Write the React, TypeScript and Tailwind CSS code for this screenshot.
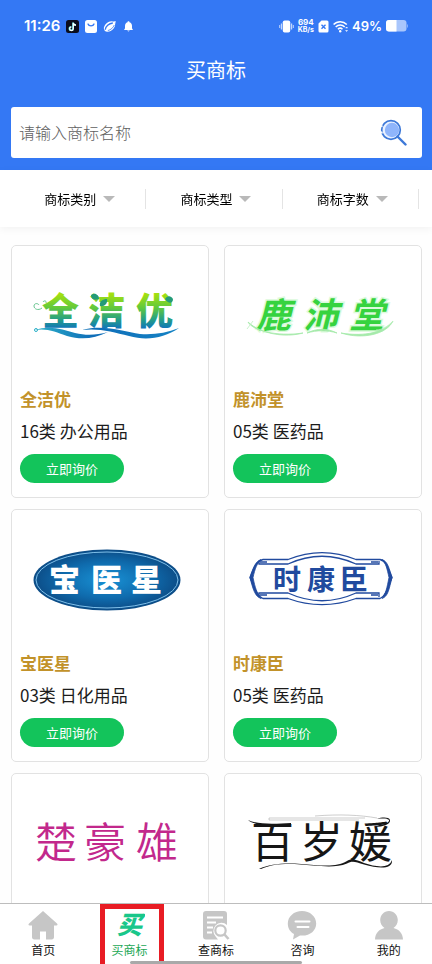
import React from "react";

const cjk = "font-['Noto_Sans_CJK_SC',sans-serif]";
const logoFont = "'Noto Sans CJK SC', sans-serif";

function StatusBar() {
  return (
    <div className="flex h-[52px] items-center justify-between pl-6 pr-6 font-['Inter',sans-serif] text-white">
      <div className="flex items-center gap-1.5">
        <span className="text-[15px] font-semibold leading-5">11:26</span>
        <svg className="h-[13px] w-[13px]" viewBox="0 0 13 13">
          <rect width="13" height="13" rx="2.5" fill="#0b0d1c" />
          <path d="M7 2.5v6a1.8 1.8 0 1 1-1.8-1.8M7 2.5c.2 1.6 1.2 2.5 2.8 2.6" fill="none" stroke="#5ff0ee" strokeWidth="1.6" />
          <path d="M7.3 2.8v6a1.8 1.8 0 1 1-1.8-1.8M7.3 2.8c.2 1.5 1.2 2.3 2.7 2.4" fill="none" stroke="#fff" strokeWidth="1.2" />
        </svg>
        <svg className="h-[13px] w-[12px]" viewBox="0 0 12 13">
          <rect width="12" height="13" rx="2.5" fill="#fff" />
          <path d="M3 4c.8 2.6 5.200 2.600 6 0" fill="none" stroke="#3478f4" strokeWidth="1.3" strokeLinecap="round" />
        </svg>
        <svg className="h-[13px] w-[13px]" viewBox="0 0 13 13">
          <ellipse cx="6.500" cy="6.500" rx="6.300" ry="4.300" transform="rotate(-38 6.500 6.500)" fill="#fff" />
          <path d="M2.200 9.800C2.400 6.500 6 3.300 9.800 3" fill="none" stroke="#3478f4" strokeWidth="1.400" />
          <path d="M4.800 10.600C8 9.800 10.300 7.500 11.300 5" fill="none" stroke="#3478f4" strokeWidth=".8" />
          <path d="M10 1.800l2.700-.9-.5 3" fill="#fff" />
        </svg>
        <svg className="h-[13px] w-[13px]" viewBox="0 0 13 13" fill="#fff">
          <path d="M6.500 1.300c.7 0 1 .4 1 1C9.300 2.900 10 4.300 10 6v2.200L11 10H2l1-1.800V6c0-1.700.7-3.100 2.500-3.700 0-.6.3-1 1-1zM5.200 10.600h2.600c-.2 1.100-2.400 1.100-2.600 0z" />
        </svg>
      </div>
      <div className="flex items-center gap-1">
        <svg className="h-[13px] w-[15px]" viewBox="0 0 15 13">
          <rect x="3.800" y="0.500" width="7.400" height="12" rx="1.800" fill="#fff" />
          <path d="M2.500 3.500v6M12.500 3.500v6" stroke="#c3d7fc" strokeWidth="1.400" />
          <path d="M.7 5v3M14.300 5v3" stroke="#c3d7fc" strokeWidth="1" />
        </svg>
        <div className="flex flex-col items-center text-[8px] font-bold leading-2">
          <span>694</span>
          <span className="text-[7px]">KB/s</span>
        </div>
        <svg className="h-[13px] w-[11px]" viewBox="0 0 11 13">
          <path d="M3.500.5H9a1.500 1.500 0 0 1 1.500 1.500v9A1.500 1.500 0 0 1 9 12.500H2A1.500 1.500 0 0 1 .5 11V3.500z" fill="#fff" />
          <path d="M3.500 4.700l4 4M7.500 4.700l-4 4" stroke="#3478f4" strokeWidth="1.400" />
        </svg>
        <svg className="h-[13px] w-[15px]" viewBox="0 0 15 13" fill="none" stroke="#fff" strokeWidth="1.500">
          <path d="M.6 4.500c3.600-3.800 9.600-3.800 13.200 0M2.700 7c2.600-2.600 6.400-2.600 9 0M4.900 9.200c1.300-1.200 3.300-1.200 4.600 0" />
          <circle cx="7.200" cy="11.300" r="1.200" fill="#fff" stroke="none" />
          <path d="M12.600 8l1-1 1 1zM12.600 10.500l1 1 1-1z" fill="#fff" strokeWidth=".5" />
        </svg>
        <span className="text-[13px] font-semibold leading-5">49%</span>
        <svg className="h-[12px] w-[22px]" viewBox="0 0 22 12">
          <rect width="20.500" height="11.500" rx="3" fill="#a9c6fc" />
          <path d="M21 4v4c1-.5 1-3.500 0-4z" fill="#a9c6fc" />
          <path d="M3 0h7.500v11.500H3a3 3 0 0 1-3-3V3a3 3 0 0 1 3-3z" fill="#fff" />
        </svg>
      </div>
    </div>
  );
}

function SearchBox() {
  return (
    <form className="ml-[11px] mr-2.5 flex h-[51px] items-center rounded-[3px] bg-white" onSubmit={(e) => e.preventDefault()}>
      <input
        type="text"
        aria-label="请输入商标名称"
        placeholder="请输入商标名称"
        className="h-full min-w-0 flex-1 bg-transparent pb-0.5 pl-2 text-[16px] font-light text-gray-800 outline-none placeholder:text-[#606060]"
      />
      <button type="submit" aria-label="搜索" className="mr-[15px]">
        <svg className="h-[27px] w-[27px]" viewBox="0 0 27 27">
          <circle cx="11" cy="11" r="9.300" fill="#e9f1ff" stroke="#3c78d8" strokeWidth="1.700" />
          <circle cx="12" cy="11" r="7.200" fill="#8fb5fb" />
          <path d="M17.500 17.500l8 8" stroke="#3c78d8" strokeWidth="2.400" strokeLinecap="round" />
          <path d="M2.300 6.500l-.8 1.500M1.500 12.500l.7 2" stroke="#fff" strokeWidth="1.500" />
        </svg>
      </button>
    </form>
  );
}

function Filters() {
  return (
    <div className="relative z-10 flex h-[57px] shrink-0 items-center bg-white pl-2.5 pr-[13px] shadow-[0_2px_8px_rgba(0,0,0,0.05)]">
      {["商标类别", "商标类型", "商标字数"].map((name) => (
        <label key={name} className="flex h-5 flex-1 items-center justify-center gap-1.5 border-r border-[#e4e4e4] pl-1">
          <select aria-label={name} className="appearance-none bg-transparent text-[13px] leading-5 text-black outline-none">
            <option>{name}</option>
          </select>
          <svg className="h-1.5 w-3" viewBox="0 0 12 6">
            <path d="M0 0h12L6 6z" fill="#b9b9b9" />
          </svg>
        </label>
      ))}
    </div>
  );
}

const svgClass = "block h-[140px] w-full";

function LogoQuan() {
  return (
    <svg className={svgClass} viewBox="0 0 196 140" role="img" aria-label="全洁优">
      <defs>
        <linearGradient id="quan" gradientUnits="userSpaceOnUse" x1="0" y1="48" x2="0" y2="82">
          <stop offset="0" stopColor="#a4e010" />
          <stop offset=".4" stopColor="#62c93c" />
          <stop offset=".75" stopColor="#259f86" />
          <stop offset="1" stopColor="#1277b8" />
        </linearGradient>
        <linearGradient id="wave" x1="0" y1="0" x2="1" y2="0">
          <stop offset="0" stopColor="#2bb0c8" />
          <stop offset=".4" stopColor="#0f6db8" />
          <stop offset="1" stopColor="#1583c4" />
        </linearGradient>
      </defs>
      <text x="30 76 124" y="79" fontFamily={logoFont} fontWeight="900" fontSize="37" fill="url(#quan)">全洁优</text>
      <path d="M23 84c14-5 28-1 40 3 12 3 22 2 33-1-14 7-27 8-41 4-11-4-20-8-32-6zM70 84c22-6 42 2 58 4 14 1 26-1 39-6-15 10-32 13-50 8-16-4-30-8-47-6z" fill="url(#wave)" />
      <path d="M30 62c-4 3-8 1-8-2s4-3 5-1M34 57c1-2-2-3-3-1" fill="none" stroke="#67c58f" strokeWidth="1" />
      <path d="M79 49c4-3 8 0 8 4-5 2-8 0-8-4zM88 60c-1-5 3-7 7-7 1 5-3 8-7 7zM153 53c3-4 6-3 8 0 0 5-5 5-8 0z" fill="#249b78" />
      <circle cx="24" cy="84" r="1.500" fill="none" stroke="#2bb0c8" />
    </svg>
  );
}

function LogoLu() {
  return (
    <svg className={svgClass} viewBox="0 0 196 140" role="img" aria-label="鹿沛堂">
      <text x="31 78 124" y="82" fontFamily={logoFont} fontWeight="700" fontSize="35" fontStyle="italic" fill="#36d33f" stroke="#dcfadc" strokeWidth="3" paintOrder="stroke">鹿沛堂</text>
      <path d="M23 76c4 8 28 15 55 11-18 5-42 1-55-11zM82 87c10-5 20-5 30 0-10-3-20-3-30 0zM116 87c24 4 44-1 52-12-6 13-30 19-52 12z" fill="#a5eaaa" stroke="#a5eaaa" strokeWidth=".8" />
      <path d="M22 83l6-8M151 84c8 0 14-6 17-9" fill="none" stroke="#bdf0bf" strokeWidth=".8" />
    </svg>
  );
}

function LogoBao() {
  return (
    <svg className={svgClass} viewBox="0 0 196 140" role="img" aria-label="宝医星">
      <defs>
        <radialGradient id="bao">
          <stop offset="0" stopColor="#1992d5" />
          <stop offset=".6" stopColor="#0f6bad" />
          <stop offset="1" stopColor="#0c4c86" />
        </radialGradient>
      </defs>
      <ellipse cx="95" cy="70" rx="73.500" ry="30.500" fill="url(#bao)" />
      <ellipse cx="95" cy="70" rx="71" ry="28" fill="none" stroke="#7fc0ea" strokeWidth="1" />
      <text x="37 79 119" y="81" fontFamily={logoFont} fontWeight="900" fontSize="31" fill="#fff">宝医星</text>
    </svg>
  );
}

function LogoShi() {
  return (
    <svg className={svgClass} viewBox="0 0 196 140" role="img" aria-label="时康臣">
      <g fill="none" stroke="#214a9e" strokeWidth="1.300">
        <path d="M38 49.500h25c22-9 46-9 68 0h24c5 1 7 5 12 18-5 13-7 19-12 21h-24c-22 8-46 8-68 0H38c-5-2-8-8-13-21 5-13 8-17 13-18z" />
        <path d="M34 51v3h29c22-10 46-10 68 0h23v-3M34 87v-4h29c22 10 46 10 68 0h23v4" />
        <path d="M35 52h7M146 52h7M35 85h7M146 85h7" strokeWidth="1.500" />
      </g>
      <path d="M36 49.500c-6 2-8 9-11 18 3 12 5 19 11 21-4-5-6-11-8-21 2-9 4-14 8-18zM157 49.500c6 2 7 9 10 18-3 12-4 19-10 21 4-5 5-11 7-21-2-9-3-14-7-18z" fill="#214a9e" stroke="#214a9e" strokeWidth=".8" />
      <text x="48 82 115" y="80" fontFamily={logoFont} fontWeight="700" fontSize="28" fill="#214a9e">时康臣</text>
    </svg>
  );
}

function LogoChu() {
  return (
    <svg className={svgClass} viewBox="0 0 196 140" role="img" aria-label="楚豪雄">
      <text x="23 72 124" y="84" fontFamily={logoFont} fontWeight="350" fontSize="42" fill="#c2288c">楚豪雄</text>
    </svg>
  );
}

function LogoBai() {
  return (
    <svg className={svgClass} viewBox="0 0 196 140" role="img" aria-label="百岁媛">
      <text x="26 75 124" y="84" fontFamily={logoFont} fontWeight="400" fontSize="43" fill="#161616">百岁媛</text>
      <path d="M23 46c10 5 28 4 43 3v2c-18 2-36 1-43-5zM34 95c14-7 34-6 55-4 16 1 24 1 33-4 5-3 10-1 17 2 12 4 25 6 28-3 1 9-12 9-28 4.500-9-3-12-4-17-1-10 4-22 3-34 2-20-2-38-3-52 3.500z" fill="#161616" />
      <path d="M152 45c7-1 13 0 12 2-2 4-10 3-14 6 8 0 16-3 15-7-1-3-8-3-13-1z" fill="#161616" />
      <path d="M44 44h96M44 46h90M44 44v2M90 42c25-2 45-1 62 2" fill="none" stroke="#9a9a9a" strokeWidth=".5" />
    </svg>
  );
}

const items = [
  { name: "全洁优", category: "16类 办公用品", Logo: LogoQuan },
  { name: "鹿沛堂", category: "05类 医药品", Logo: LogoLu },
  { name: "宝医星", category: "03类 日化用品", Logo: LogoBao },
  { name: "时康臣", category: "05类 医药品", Logo: LogoShi },
  { name: "楚豪雄", category: "", Logo: LogoChu },
  { name: "百岁媛", category: "", Logo: LogoBai },
];

function Card({ item }: { item: (typeof items)[number] }) {
  const { name, category, Logo } = item;
  return (
    <article className="rounded-[5px] border border-[#e2e2e2] bg-white pb-3.5">
      <Logo />
      {category && (
        <div className="px-2">
          <h2 className="text-[17px] font-bold leading-[26px] text-[#c2922a]">{name}</h2>
          <p className="mt-1.5 text-[17px] leading-[26px] text-[#1c1c1c]">{category}</p>
          <button type="button" className="mt-2.5 block h-[29px] w-[104px] rounded-full bg-[#13c45b] text-[13px] text-white">
            立即询价
          </button>
        </div>
      )}
    </article>
  );
}

const navIcons: Record<string, React.ReactNode> = {
  首页: (
    <path d="M15 1L1 13.500c-1 1-.5 2 .7 2H4V27c0 1.500.8 2.500 2.300 2.500H12v-8h6v8h5.700c1.500 0 2.300-1 2.300-2.500V15.500h2.300c1.200 0 1.700-1 .7-2z" fill="#c6c6c6" />
  ),
  买商标: (
    <text x="2" y="24" fontFamily={logoFont} fontWeight="900" fontStyle="italic" fontSize="25" fill="#19c78a">买</text>
  ),
  查商标: (
    <g>
      <path d="M5 1h18c2 0 3 1 3 3v11a8 8 0 0 0-11 12l2 2.500H5c-2 0-3-1-3-3V4c0-2 1-3 3-3z" fill="#c6c6c6" />
      <path d="M6 7.500h16M6 12.500h9M6 17.500h6M6 22.500h5" stroke="#fff" strokeWidth="1.800" />
      <circle cx="19.500" cy="20.500" r="5.200" fill="#fff" stroke="#c6c6c6" strokeWidth="2.200" />
      <path d="M23.500 24.500l4 4.500" stroke="#c6c6c6" strokeWidth="2.600" />
    </g>
  ),
  咨询: (
    <g>
      <path d="M15 1C7 1 .8 6.500.8 13.500c0 5 2.500 8.500 6.200 10.500l-1 5.500 7-4c9.500 1 16.200-4.500 16.200-12C29.200 6.500 23 1 15 1z" fill="#c6c6c6" />
      <path d="M8.500 11.500h14M10.500 17h11" stroke="#fff" strokeWidth="2" strokeLinecap="round" />
    </g>
  ),
  我的: (
    <path d="M15 1c5 0 8.800 4 8.800 9 0 3.500-1.800 6.300-4.300 8 5.500 1.500 9.300 5 9.500 11.500H1C1.200 23 5 19.500 10.500 18 8 16.300 6.200 13.500 6.200 10c0-5 3.800-9 8.800-9z" fill="#c6c6c6" />
  ),
};

function BottomNav() {
  return (
    <nav className="relative flex h-[61px] shrink-0 border-t border-[#bdbdbd] bg-white">
      {Object.keys(navIcons).map((name) => {
        const active = name === "买商标";
        return (
          <a
            key={name}
            href="#"
            aria-current={active ? "page" : undefined}
            className={`relative flex flex-1 flex-col items-center pt-1.5 text-[12px] leading-4 ${active ? "text-[#1ba855]" : "text-[#111111]"}`}
          >
            <svg className="h-[30px] w-[30px]" viewBox="0 0 30 30">{navIcons[name]}</svg>
            <span className="mt-0.5">{name}</span>
            {active && (
              <span className="absolute bottom-0 left-1/2 top-0 ml-[-30px] w-16 border-x-5 border-t-5 border-[#e81c24]" />
            )}
          </a>
        );
      })}
      <div className="absolute bottom-0 left-[30%] right-[30%] h-[3px] rounded-full bg-[#a9a9a9]" />
    </nav>
  );
}

export default function App() {
  return (
    <div className={`flex h-screen flex-col overflow-hidden bg-white ${cjk}`}>
      <header className="shrink-0 bg-[#3478f4] pb-3">
        <StatusBar />
        <h1 className="mb-5 text-center text-[20px] leading-[35px] text-white">买商标</h1>
        <SearchBox />
      </header>
      <Filters />
      <main className="min-h-0 flex-1 overflow-y-auto bg-[#fefefe] [scrollbar-width:none]">
        <div className="grid grid-cols-2 gap-x-[15px] gap-y-[11px] pl-[11px] pr-2.5 pt-[18px]">
          {items.map((item) => (
            <Card key={item.name} item={item} />
          ))}
        </div>
      </main>
      <BottomNav />
    </div>
  );
}
